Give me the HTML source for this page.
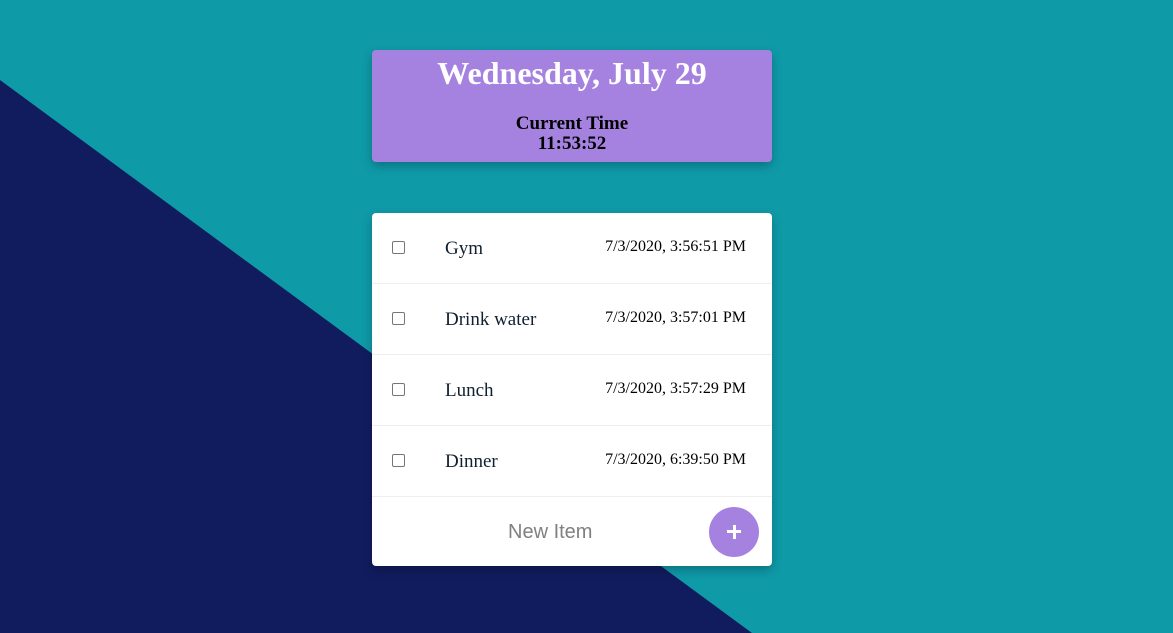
<!DOCTYPE html>
<html><head><style>
body{margin:0;width:1173px;height:633px;overflow:hidden;background:#0f9aa8;position:relative;font-family:"Liberation Serif",serif}
svg.bg{position:absolute;left:0;top:0}
.c1{position:absolute;left:372px;top:50px;width:400px;height:112px;background:#a682e0;border-radius:4px;box-shadow:0 4px 10px rgba(0,0,0,.25);text-align:center}
.c1 h1{margin:0;position:absolute;top:5px;width:100%;font-size:32px;color:#fff;font-weight:bold}
.ct{position:absolute;top:64px;width:100%;font-size:19px;font-weight:bold;line-height:20px;color:#000}
.c2{position:absolute;left:372px;top:213px;width:400px;height:353px;background:#fff;border-radius:4px;box-shadow:0 4px 10px rgba(0,0,0,.25)}
.row{position:relative;height:70px;border-bottom:1px solid #eee}
.cb{position:absolute;left:20px;top:28px;width:11px;height:11px;border:1px solid #767676;border-radius:2px}
.nm{position:absolute;left:73px;top:25px;font-size:19px;color:#102030}
.dt{position:absolute;right:26px;top:25px;font-size:16px;color:#000}
.ni{position:absolute;left:136px;top:308px;font-family:"Liberation Sans",sans-serif;font-size:20px;color:#808080}
.btn{position:absolute;left:337px;top:294px;width:50px;height:50px;border-radius:50%;background:#a682e0}
.btn:before{content:"";position:absolute;left:18px;top:23px;width:14px;height:3px;background:#fff}
.btn:after{content:"";position:absolute;left:23.5px;top:17.5px;width:3px;height:14px;background:#fff}
</style></head><body>
<svg class="bg" width="1173" height="633"><polygon points="0,80 752,633 0,633" fill="#111c5e"/></svg>
<div class="c1"><h1>Wednesday, July 29</h1><div class="ct">Current Time<br>11:53:52</div></div>
<div class="c2">
<div class="row"><div class="cb"></div><div class="nm">Gym</div><div class="dt">7/3/2020, 3:56:51 PM</div></div>
<div class="row"><div class="cb"></div><div class="nm">Drink water</div><div class="dt">7/3/2020, 3:57:01 PM</div></div>
<div class="row"><div class="cb"></div><div class="nm">Lunch</div><div class="dt">7/3/2020, 3:57:29 PM</div></div>
<div class="row"><div class="cb"></div><div class="nm">Dinner</div><div class="dt">7/3/2020, 6:39:50 PM</div></div>
<div class="ni">New Item</div>
<div class="btn"></div>
</div>
</body></html>
